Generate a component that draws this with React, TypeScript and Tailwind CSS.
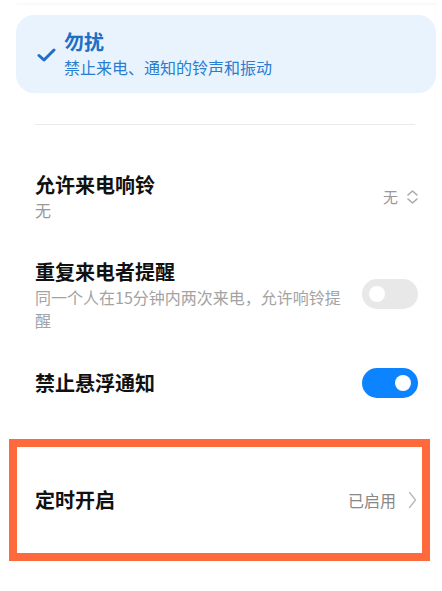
import React from "react";

const font = { fontFamily: '"Noto Sans CJK SC", "Noto Sans", sans-serif' };

function Toggle({ on }: { on: boolean }) {
  return (
    <div
      className={`w-[56px] h-[30px] rounded-full flex items-center shrink-0 px-[7px] ${
        on ? "bg-[#0d84ff] justify-end" : "bg-[#e8e8e8] justify-start"
      }`}
    >
      <div className="w-[16px] h-[16px] rounded-full bg-white" />
    </div>
  );
}

export default function App() {
  return (
    <div className="w-[442px] h-[591px] bg-white overflow-hidden" style={font}>
      <div className="h-[3px] ml-[16px] mr-[5px] rounded-b-[16px] bg-white shadow-[0_1px_3px_rgba(0,0,0,0.05)]" />
      <div className="mt-[12px] ml-[16px] mr-[6px] h-[78px] rounded-[18px] bg-[#e8f3fd] flex items-center pl-[21px]">
        <svg width="19" height="14" viewBox="0 0 19 14" className="shrink-0 mt-[2px]">
          <path d="M2 7.5 L7 12 L17 2" fill="none" stroke="#1f6fc4" strokeWidth="3" strokeLinecap="round" strokeLinejoin="round" />
        </svg>
        <div className="ml-[8px] flex flex-col mt-[3px]">
          <div className="text-[20px] leading-[24px] font-semibold text-[#1f6fc4]">勿扰</div>
          <div className="text-[16px] leading-[27px] text-[#2a7dd0]">禁止来电、通知的铃声和振动</div>
        </div>
      </div>

      <div className="mt-[31px] ml-[35px] mr-[27px] h-px bg-[#ebebeb]" />

      <div className="mt-[46px] pl-[35px] pr-[23px] flex items-center justify-between">
        <div className="flex flex-col">
          <div className="text-[20px] leading-[28px] font-semibold text-[#111]">允许来电响铃</div>
          <div className="text-[16px] leading-[22px] text-[#999]">无</div>
        </div>
        <div className="flex items-center gap-[8px] mt-[2px]">
          <span className="text-[15px] text-[#999]">无</span>
          <svg width="13" height="16" viewBox="0 0 13 16">
            <path d="M2 6 L6.5 2 L11 6 M2 10 L6.5 14 L11 10" fill="none" stroke="#aaa" strokeWidth="1.6" strokeLinecap="round" strokeLinejoin="round" />
          </svg>
        </div>
      </div>

      <div className="mt-[37px] pl-[35px] pr-[24px] flex items-center justify-between">
        <div className="flex flex-col w-[318px]">
          <div className="text-[20px] leading-[28px] font-semibold text-[#111]">重复来电者提醒</div>
          <div className="text-[16px] leading-[23px] text-[#a3a3a3]">同一个人在15分钟内两次来电，允许响铃提醒</div>
        </div>
        <div className="-mt-[2px]">
          <Toggle on={false} />
        </div>
      </div>

      <div className="mt-[36px] pl-[35px] pr-[24px] flex items-center justify-between">
        <div className="text-[20px] leading-[28px] font-semibold text-[#111]">禁止悬浮通知</div>
        <Toggle on={true} />
      </div>

      <div className="mt-[41px] ml-[9px] w-[421px] h-[122px] border-[8px] border-[#ff6a3d] flex items-center justify-between pl-[18px] pr-[5px]">
        <div className="text-[20px] leading-[28px] font-semibold text-[#111]">定时开启</div>
        <div className="flex items-center gap-[12px]">
          <span className="text-[16px] text-[#888]">已启用</span>
          <svg width="9" height="18" viewBox="0 0 9 18">
            <path d="M1.5 1.5 L7.5 9 L1.5 16.5" fill="none" stroke="#bbb" strokeWidth="1.4" strokeLinecap="round" strokeLinejoin="round" />
          </svg>
        </div>
      </div>
    </div>
  );
}
